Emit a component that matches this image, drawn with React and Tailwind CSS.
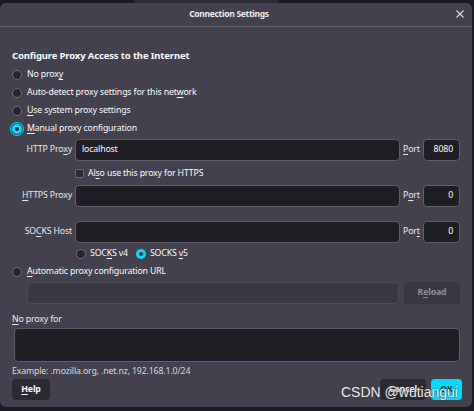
import React from 'react';

const font = { fontFamily: '"Noto Sans", "Open Sans", sans-serif' };

// underline one letter (access key)
const K = ({ children }) => <span className="underline underline-offset-2">{children}</span>;

const Radio = ({ checked, focused }) => {
  if (checked) {
    return (
      <span
        className={`flex h-[10px] w-[10px] shrink-0 items-center justify-center rounded-full bg-[#00ddff] ${
          focused ? 'outline-[1.5px] outline-offset-1 outline-[#00ddff]' : ''
        }`}
      >
        <span className="h-[4px] w-[4px] rounded-full bg-[#2b2a33]" />
      </span>
    );
  }
  return <span className="h-[10px] w-[10px] shrink-0 rounded-full border border-[#6e6d78] bg-[#26252d]" />;
};

const Input = ({ value, className = '' }) => (
  <div
    className={`flex h-[22px] items-center rounded-[4px] border border-[#5f5e6a] bg-[#1f1e25] px-[6px] text-[#fbfbfe] ${className}`}
  >
    {value}
  </div>
);

const ProxyRow = ({ label, value, port, portLabel }) => (
  <div className="flex h-[22px] items-center">
    <div className="w-[63px] pr-[3px] text-right text-[#e7e7ec]">{label}</div>
    <Input value={value} className="flex-1" />
    <div className="w-[23px] pl-[3px] text-[#e7e7ec]">{portLabel}</div>
    <Input value={port} className="w-[37px] justify-end" />
  </div>
);

const RadioRow = ({ children, checked, focused, h = 'h-[18px]' }) => (
  <div className={`flex ${h} items-center gap-[5px]`}>
    <Radio checked={checked} focused={focused} />
    <span>{children}</span>
  </div>
);

export default function App() {
  return (
    <div
      className="relative h-[411px] w-[474px] overflow-hidden bg-[#1c1b22] text-[8.75px] tracking-[-0.15px] text-[#fbfbfe]"
      style={font}
    >
      {/* strip of the window behind */}
      <div className="flex h-[3px]">
        <div className="ml-[133px] w-[145px] rounded-b-[3px] bg-[#2b2a33]" />
      </div>

      <div className="flex h-[404px] w-[472px] flex-col rounded-[6px] bg-[#42414d]">
        {/* header */}
        <div className="relative flex h-[24px] items-center justify-center border-b border-[#62616c] pr-[14px] text-[8.5px] font-bold tracking-[-0.3px] text-[#ececf0]">
          Connection Settings
          <svg className="absolute right-[8px] top-[7px]" width="8" height="8" viewBox="0 0 8 8">
            <path d="M0.5 0.5 L7.5 7.5 M7.5 0.5 L0.5 7.5" stroke="#d8d8de" strokeWidth="1.2" />
          </svg>
        </div>

        <div className="flex flex-1 flex-col px-[12px]">
          <div className="mt-[21px] h-[16px] text-[9.5px] font-bold leading-[16px]">Configure Proxy Access to the Internet</div>

          <div className="mt-[2px] flex flex-col">
            <RadioRow>No prox<K>y</K></RadioRow>
            <RadioRow>Auto-detect proxy settings for this net<K>w</K>ork</RadioRow>
            <RadioRow><K>U</K>se system proxy settings</RadioRow>
            <RadioRow checked focused><K>M</K>anual proxy configuration</RadioRow>
          </div>

          <div className="mt-[1px]">
            <ProxyRow label={<>HTTP Pro<K>x</K>y</>} value="localhost" port="8080" portLabel={<><K>P</K>ort</>} />
          </div>

          <div className="mt-[2px] flex h-[21px] items-center gap-[4px] pl-[63px]">
            <span className="h-[9px] w-[9px] rounded-[2px] border border-[#6a6975] bg-[#2b2a33]" />
            <span>Al<K>s</K>o use this proxy for HTTPS</span>
          </div>

          <div className="mt-[1px]">
            <ProxyRow label={<><K>H</K>TTPS Proxy</>} value="" port="0" portLabel={<>P<K>o</K>rt</>} />
          </div>

          <div className="mt-[14px]">
            <ProxyRow label={<>SO<K>C</K>KS Host</>} value="" port="0" portLabel={<>Por<K>t</K></>} />
          </div>

          <div className="flex h-[21px] items-center pl-[64px]">
            <Radio />
            <span className="ml-[4px]">SOC<K>K</K>S v4</span>
            <span className="ml-[8px]"><Radio checked /></span>
            <span className="ml-[4px]">SOCKS <K>v</K>5</span>
          </div>

          <RadioRow h="h-[16px]"><K>A</K>utomatic proxy configuration URL</RadioRow>

          <div className="mt-[2px] flex h-[22px] gap-[5px] pl-[15px]">
            <div className="flex-1 rounded-[4px] border border-[#4c4b57] bg-[#393843]" />
            <div className="flex w-[56px] items-center justify-center rounded-[4px] bg-[#393842] font-bold text-[#8d8c96]">
              <span>R<K>e</K>load</span>
            </div>
          </div>

          <div className="mt-[8px] h-[14px] leading-[14px] text-[#ececf0]"><K>N</K>o proxy for</div>
          <div className="ml-[2px] mt-[2px] h-[34px] rounded-[4px] border border-[#5f5e6a] bg-[#1f1e25]" />

          <div className="mt-[2px] h-[14px] leading-[14px] text-[#d8d8de]">Example: .mozilla.org, .net.nz, 192.168.1.0/24</div>

          <div className="mt-[1px] flex h-[21px] items-center">
            <div className="flex h-[21px] w-[38px] items-center justify-center rounded-[4px] bg-[#2b2a33] font-bold">
              <span><K>H</K>elp</span>
            </div>
            <div className="-mr-[2px] ml-auto flex gap-[5px]">
              <div className="flex h-[21px] w-[46px] items-center justify-center rounded-[4px] bg-[#2b2a33] font-bold">Cancel</div>
              <div className="flex h-[21px] w-[31px] items-center justify-center rounded-[4px] bg-[#00ddff] font-bold text-[#2b2a33]">
                OK
              </div>
            </div>
          </div>
        </div>
      </div>

      {/* watermark */}
      <div
        className="absolute left-[341px] top-[382px] text-[14px] leading-[20px] tracking-normal text-[#e8e8e8]"
        style={{ fontFamily: '"Liberation Sans", Arial, sans-serif', textShadow: '0 0 2px #333' }}
      >
        CSDN @wutiangui
      </div>
    </div>
  );
}
